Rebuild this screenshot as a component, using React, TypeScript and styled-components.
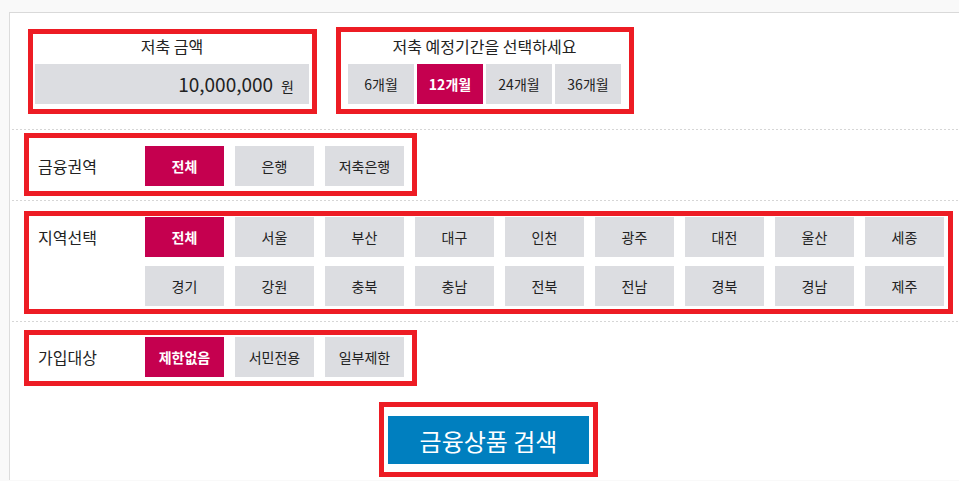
import React from "react";
import styled, { createGlobalStyle } from "styled-components";

const GlobalStyle = createGlobalStyle`
  html, body {
    margin: 0;
    padding: 0;
    background: #f9f9f9;
    font-family: "Noto Sans CJK KR", "Noto Sans", sans-serif;
    color: #222;
  }
`;

const Page = styled.div`
  padding: 12px 0 0 9px;
`;

const Panel = styled.div`
  background: #fff;
  border-top: 1px solid #d9d9d9;
  border-left: 1px solid #dcdcdc;
  height: 468px;
  box-sizing: border-box;
`;

// red annotation frame around each block
const Marked = styled.div`
  border: 5px solid #ed1c24;
  box-sizing: content-box;
`;

const TopRow = styled.div`
  display: flex;
  align-items: flex-end;
  gap: 19px;
  padding: 14px 0 15px 18px;
`;

const AmountBox = styled(Marked)`
  padding: 0 3px 5px 2px;
`;

const PeriodBox = styled(Marked)`
  padding: 2px 8px 5px 7px;
`;

const Title = styled.div`
  height: 24px;
  line-height: 24px;
  margin-bottom: 6px;
  text-align: center;
  font-size: 16px;
  color: #222;
`;

const AmountField = styled.div`
  width: 274px;
  height: 40px;
  line-height: 40px;
  background: #dcdde1;
  text-align: right;
  padding-right: 15px;
  box-sizing: border-box;
  color: #222;
`;

const Amount = styled.span`
  font-size: 19px;
`;

const Won = styled.span`
  font-size: 14px;
  margin-left: 8px;
`;

const Periods = styled.div`
  display: flex;
  gap: 3px;
`;

const Chip = styled.div<{ $active?: boolean; $w?: number }>`
  width: ${(p) => p.$w ?? 79}px;
  height: 40px;
  display: flex;
  align-items: center;
  justify-content: center;
  font-size: 14px;
  background: ${(p) => (p.$active ? "#c5004f" : "#dcdde1")};
  color: ${(p) => (p.$active ? "#fff" : "#222")};
  font-weight: ${(p) => (p.$active ? 700 : 400)};
`;

const Divider = styled.div`
  height: 1px;
  margin-left: 2px;
  background-image: repeating-linear-gradient(
    to right,
    #d6d6d6 0 2px,
    transparent 2px 4px
  );
`;

const FilterRow = styled(Marked)<{ $mt: number; $mb: number; $pad: string }>`
  display: flex;
  align-items: flex-start;
  width: fit-content;
  margin: ${(p) => p.$mt}px 0 ${(p) => p.$mb}px 14px;
  padding: ${(p) => p.$pad};
`;

const Label = styled.div`
  width: 107px;
  height: 40px;
  line-height: 40px;
  font-size: 16px;
  color: #222;
`;

const ChipGrid = styled.div<{ $cols: number }>`
  display: grid;
  grid-template-columns: repeat(${(p) => p.$cols}, 79px);
  gap: 9px 11px;
`;

const SearchWrap = styled.div`
  display: flex;
  justify-content: center;
  padding-left: 8px;
  margin-top: 16px;
`;

const SearchBox = styled(Marked)`
  padding: 9px 4px 8px 4px;
`;

const SearchButton = styled.button`
  width: 201px;
  height: 48px;
  border: none;
  background: #007fbf;
  color: #fff;
  font-family: inherit;
  font-size: 24px;
  padding: 0;
  cursor: pointer;
`;

const periods = ["6개월", "12개월", "24개월", "36개월"];
const sectors = ["전체", "은행", "저축은행"];
const regions = [
  "전체", "서울", "부산", "대구", "인천", "광주", "대전", "울산", "세종",
  "경기", "강원", "충북", "충남", "전북", "전남", "경북", "경남", "제주",
];
const targets = ["제한없음", "서민전용", "일부제한"];

export default function App() {
  return (
    <>
      <GlobalStyle />
      <Page>
        <Panel>
          <TopRow>
            <AmountBox>
              <Title>저축 금액</Title>
              <AmountField>
                <Amount>10,000,000</Amount>
                <Won>원</Won>
              </AmountField>
            </AmountBox>
            <PeriodBox>
              <Title>저축 예정기간을 선택하세요</Title>
              <Periods>
                {periods.map((p) => (
                  <Chip key={p} $w={66} $active={p === "12개월"}>
                    {p}
                  </Chip>
                ))}
              </Periods>
            </PeriodBox>
          </TopRow>
          <Divider />
          <FilterRow $mt={3} $mb={4} $pad="8px 8px 5px 9px">
            <Label>금융권역</Label>
            <ChipGrid $cols={3}>
              {sectors.map((s, i) => (
                <Chip key={s} $active={i === 0}>
                  {s}
                </Chip>
              ))}
            </ChipGrid>
          </FilterRow>
          <Divider />
          <FilterRow $mt={10} $mb={7} $pad="1px 4px 3px 9px">
            <Label>지역선택</Label>
            <ChipGrid $cols={9}>
              {regions.map((r, i) => (
                <Chip key={r + i} $active={i === 0}>
                  {r}
                </Chip>
              ))}
            </ChipGrid>
          </FilterRow>
          <Divider />
          <FilterRow $mt={8} $mb={0} $pad="2px 8px 4px 9px">
            <Label>가입대상</Label>
            <ChipGrid $cols={3}>
              {targets.map((t, i) => (
                <Chip key={t} $active={i === 0}>
                  {t}
                </Chip>
              ))}
            </ChipGrid>
          </FilterRow>
          <SearchWrap>
            <SearchBox>
              <SearchButton>금융상품 검색</SearchButton>
            </SearchBox>
          </SearchWrap>
        </Panel>
      </Page>
    </>
  );
}
